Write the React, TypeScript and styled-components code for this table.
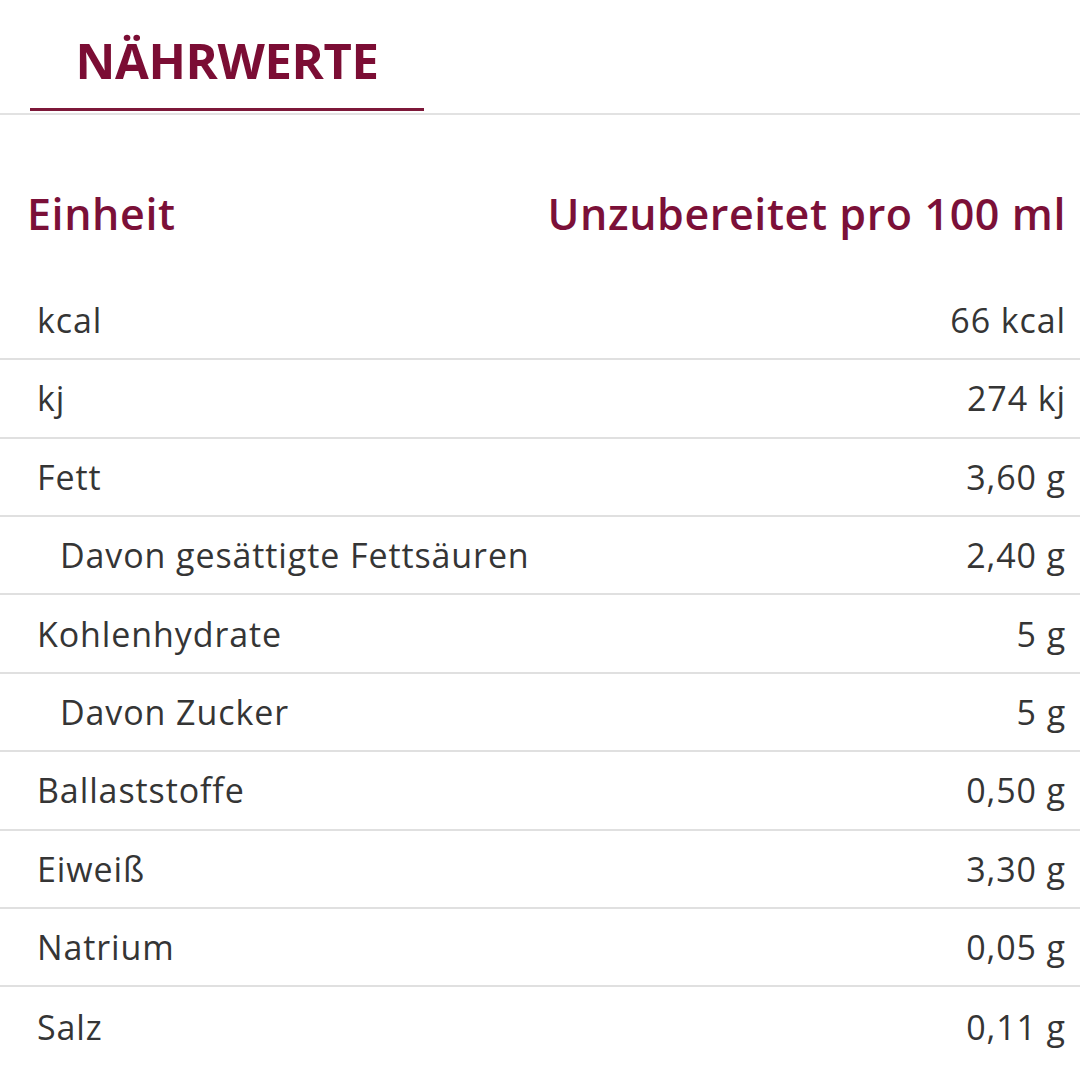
import React from "react";
import styled, { createGlobalStyle } from "styled-components";

const Global = createGlobalStyle`
  html, body { margin: 0; padding: 0; background: #ffffff; }
  body { font-family: "Open Sans", "Noto Sans", sans-serif; color: #333333; }
`;

const Page = styled.div`
  width: 1080px;
  height: 1080px;
  overflow: hidden;
  background: #fff;
`;

const TabBar = styled.div`
  display: flex;
  padding-top: 26px;
  padding-bottom: 2px;
  border-bottom: 2px solid #e2e2e2;
`;

const Tab = styled.div`
  margin-left: 30px;
  width: 394px;
  height: 85px;
  box-sizing: border-box;
  display: flex;
  justify-content: center;
  align-items: flex-start;
  border-bottom: 3px solid #7d1839;
`;

const TabTitle = styled.h1`
  margin: 0;
  font-size: 49px;
  line-height: 68px;
  font-weight: 700;
  color: #7b0d34;
  letter-spacing: -0.4px;
`;

const Table = styled.div`
  display: flex;
  flex-direction: column;
`;

const HeadRow = styled.div`
  display: flex;
  justify-content: space-between;
  align-items: flex-start;
  height: 166.8px;
  box-sizing: border-box;
  padding: 69px 14px 0 27px;
`;

const HeadCell = styled.div`
  font-size: 43px;
  line-height: 60px;
  font-weight: 600;
  color: #7b1038;
  letter-spacing: 0.6px;
`;

const Row = styled.div`
  display: flex;
  justify-content: space-between;
  align-items: center;
  height: 78.4px;
  box-sizing: border-box;
  border-bottom: 2px solid #e0e0e0;
  padding: 0 14px 0 37px;
  &:last-child { border-bottom: none; }
`;

const Label = styled.span<{ $indent?: boolean }>`
  font-size: 34px;
  letter-spacing: 0.9px;
  color: #353535;
  padding-left: ${(p) => (p.$indent ? "23px" : "0")};
`;

const Value = styled.span`
  font-size: 34px;
  letter-spacing: 0.9px;
  color: #353535;
`;

const rows: { label: string; value: string; indent?: boolean }[] = [
  { label: "kcal", value: "66 kcal" },
  { label: "kj", value: "274 kj" },
  { label: "Fett", value: "3,60 g" },
  { label: "Davon gesättigte Fettsäuren", value: "2,40 g", indent: true },
  { label: "Kohlenhydrate", value: "5 g" },
  { label: "Davon Zucker", value: "5 g", indent: true },
  { label: "Ballaststoffe", value: "0,50 g" },
  { label: "Eiweiß", value: "3,30 g" },
  { label: "Natrium", value: "0,05 g" },
  { label: "Salz", value: "0,11 g" },
];

export default function App() {
  return (
    <Page>
      <Global />
      <TabBar>
        <Tab>
          <TabTitle>NÄHRWERTE</TabTitle>
        </Tab>
      </TabBar>
      <Table>
        <HeadRow>
          <HeadCell>Einheit</HeadCell>
          <HeadCell>Unzubereitet pro 100 ml</HeadCell>
        </HeadRow>
        {rows.map((r) => (
          <Row key={r.label}>
            <Label $indent={r.indent}>{r.label}</Label>
            <Value>{r.value}</Value>
          </Row>
        ))}
      </Table>
    </Page>
  );
}
